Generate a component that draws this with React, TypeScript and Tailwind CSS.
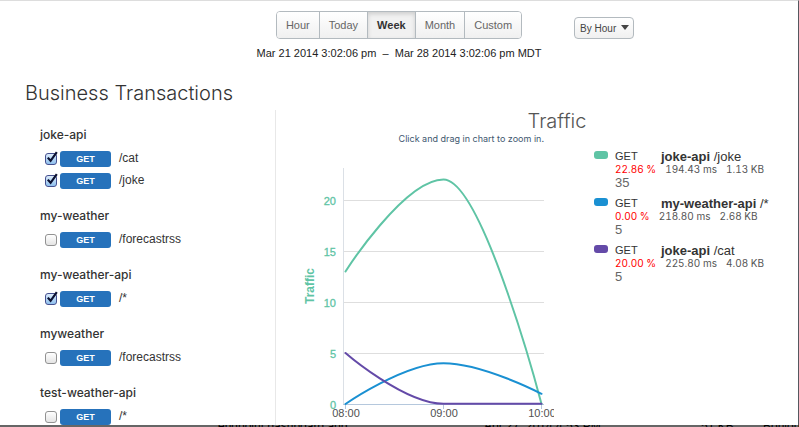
import React, { useState } from "react";

const SANS = "font-['Liberation_Sans',Arial,sans-serif]";
const INTER = "font-['Inter','Liberation_Sans',sans-serif]";

const ranges = ["Hour", "Today", "Week", "Month", "Custom"];

const groups = [
  { name: "joke-api", items: [{ path: "/cat", on: true }, { path: "/joke", on: true }] },
  { name: "my-weather", items: [{ path: "/forecastrss", on: false }] },
  { name: "my-weather-api", items: [{ path: "/*", on: true }] },
  { name: "myweather", items: [{ path: "/forecastrss", on: false }] },
  { name: "test-weather-api", items: [{ path: "/*", on: false }] },
];

const legend = [
  { swatch: "bg-[#5fc4a5]", api: "joke-api", path: "/joke", errors: "22.86 %", time: "194.43 ms", size: "1.13 KB", count: "35" },
  { swatch: "bg-[#1a90d2]", api: "my-weather-api", path: "/*", errors: "0.00 %", time: "218.80 ms", size: "2.68 KB", count: "5" },
  { swatch: "bg-[#644aa8]", api: "joke-api", path: "/cat", errors: "20.00 %", time: "225.80 ms", size: "4.08 KB", count: "5" },
];

const yTicks = [
  { label: "20", y: 55 },
  { label: "15", y: 106 },
  { label: "10", y: 157 },
  { label: "5", y: 208 },
  { label: "0", y: 259 },
];

const xTicks = [
  { label: "08:00", x: 70 },
  { label: "09:00", x: 168 },
  { label: "10:00", x: 266 },
];

function RangePicker() {
  const [active, setActive] = useState("Week");
  return (
    <div role="group" aria-label="Time range" className="flex h-7 overflow-hidden rounded border border-[#b3babf] divide-x divide-[#b3babf]">
      {ranges.map((r) => (
        <button
          key={r}
          type="button"
          aria-pressed={active === r}
          onClick={() => setActive(r)}
          className={
            active === r
              ? "bg-[#f1f1f1] px-[9px] text-[11px] font-bold text-[#333] shadow-[inset_0_2px_4px_rgba(0,0,0,0.15)]"
              : "bg-gradient-to-b from-white to-[#f0f0f0] px-[9px] text-[11px] text-[#666]"
          }
        >
          {r}
        </button>
      ))}
    </div>
  );
}

function Transaction({ path, on }: { path: string; on: boolean }) {
  return (
    <label className="flex h-[22px] items-center pl-[5px]">
      <span className="relative mr-[3px] flex">
        <input
          type="checkbox"
          defaultChecked={on}
          className="peer h-3 w-3 appearance-none rounded-[3px] border border-[#929292] bg-gradient-to-b from-white to-[#e4e4e4] checked:border-[#45508f] checked:from-[#dcebfa] checked:to-[#8fc0ee]"
        />
        <svg viewBox="0 0 14 14" className="pointer-events-none absolute -top-[2px] left-0 hidden h-[14px] w-[14px] peer-checked:block" aria-hidden="true">
          <path d="M2.8 6.6 L5.6 9.8 L11.8 1.2" fill="none" stroke="#0b1030" strokeWidth="2.2" />
        </svg>
      </span>
      <span className="h-4 w-[51px] rounded-[3px] bg-[#2672bb] text-center text-[9px] leading-4 font-bold text-white">GET</span>
      <span className="ml-2 pb-[2px] text-[12px] leading-5 text-[#333]">{path}</span>
    </label>
  );
}

function TrafficChart() {
  return (
    <svg width="278" height="280" viewBox="0 0 278 280" role="img" aria-label="Traffic per hour" className="block shrink-0">
      <g stroke="#dedede" shapeRendering="crispEdges">
        {yTicks.slice(0, 4).map((t) => (
          <line key={t.label} x1="67" x2="268" y1={t.y + 0.5} y2={t.y + 0.5} />
        ))}
        <line x1="67.5" x2="67.5" y1="23" y2="260" stroke="#dbe0e6" />
      </g>
      <g fill="#5fc4a5" stroke="#5fc4a5" strokeWidth="0.3" fontSize="11" textAnchor="end">
        {yTicks.map((t) => (
          <text key={t.label} x="60" y={t.y + 5}>{t.label}</text>
        ))}
      </g>
      <text transform="translate(38 141) rotate(-90)" textAnchor="middle" fontSize="12" fontWeight="bold" fill="#5fc4a5">Traffic</text>
      <g stroke="#b5c8dd" shapeRendering="crispEdges">
        <line x1="67" x2="268" y1="259.5" y2="259.5" />
        {xTicks.map((t) => (
          <line key={t.label} x1={t.x - 0.5} x2={t.x - 0.5} y1="260" y2="264" />
        ))}
      </g>
      <g fill="none" strokeWidth="2" strokeLinecap="round">
        <path d="M69.5 126.5 C69.5 126.5 128.3 34.5 167.5 34.5 C206.7 34.5 265.5 259 265.5 259" stroke="#5fc4a5" />
        <path d="M69.5 259 C69.5 259 128.3 218.2 167.5 218.2 C206.7 218.2 265.5 248.8 265.5 248.8" stroke="#1a90d2" />
        <path d="M69.5 208 C69.5 208 128.3 258.8 167.5 258.8 L265.5 258.8" stroke="#644aa8" />
      </g>
      <g fill="#505050" fontSize="11" textAnchor="middle">
        {xTicks.map((t) => (
          <text key={t.label} x={t.x} y="272">{t.label}</text>
        ))}
      </g>
    </svg>
  );
}

export default function App() {
  return (
    <div className={`${SANS} flex h-screen flex-col overflow-hidden bg-[#666]`}>
      <main className="min-h-0 flex-1 overflow-hidden border-t border-r border-t-[#dddddd] border-r-[#55585f] bg-white">
        <header className="pt-[10px]">
          <div className="grid grid-cols-[1fr_auto_1fr] items-end">
            <span />
            <RangePicker />
            <div className="relative ml-[52px] w-[60px]">
              <select aria-label="Group by" className="block h-[22px] w-full appearance-none rounded border border-[#b3babf] bg-gradient-to-b from-white to-[#f0f0f0] pl-[5px] text-[10px] text-[#444]">
                <option>By Hour</option>
                <option>By Day</option>
              </select>
              <svg viewBox="0 0 8 5" className="pointer-events-none absolute top-2 right-[5px] h-[5px] w-2" aria-hidden="true">
                <path d="M0 0 H8 L4 5 Z" fill="#444" />
              </svg>
            </div>
          </div>
          <p className="mt-[6px] text-center text-[11px] leading-4 whitespace-pre text-[#222]">{"Mar 21 2014 3:02:06 pm  –  Mar 28 2014 3:02:06 pm MDT"}</p>
        </header>

        <div className="mt-5 flex">
          <section className="w-[275px] shrink-0">
            <h1 className={`${INTER} pl-[25px] text-[20px] leading-6 font-light text-[#333]`}>Business Transactions</h1>
            <div className="mt-5 flex flex-col gap-[14px] pl-10">
              {groups.map((g) => (
                <div key={g.name}>
                  <h2 className={`${INTER} mb-[3px] text-[12px] leading-5 font-medium text-[#333]`}>{g.name}</h2>
                  {g.items.map((i) => (
                    <Transaction key={i.path} path={i.path} on={i.on} />
                  ))}
                </div>
              ))}
            </div>
          </section>

          <section className="mt-[29px] min-w-0 flex-1 border-l border-[#e8e8e8]">
            <h2 className={`${INTER} pl-10 text-center text-[20px] leading-[22px] font-light text-[#555]`}>Traffic</h2>
            <div className="flex">
              <div className="w-[278px] shrink-0">
                <p className={`${INTER} pr-[10px] text-right text-[9px] leading-[13px] text-[#3e576f]`}>Click and drag in chart to zoom in.</p>
                <TrafficChart />
              </div>
              <ul className="ml-10 flex flex-col gap-2 pt-[18px]">
                {legend.map((l) => (
                  <li key={l.api + l.path} className="flex">
                    <span className={`${l.swatch} mt-px mr-[7px] h-2 w-[14px] shrink-0 rounded-[3px]`} />
                    <div>
                      <p className="flex text-[13px] leading-[13px] text-[#333]">
                        <span className="w-[46px] text-[11px]">GET</span>
                        <span><b>{l.api}</b> {l.path}</span>
                      </p>
                      <p className={`${INTER} flex gap-[9px] text-[10px] leading-[13px] text-[#555] tabular-nums`}>
                        <span className="text-[#ff0000]">{l.errors}</span>
                        <span>{l.time}</span>
                        <span>{l.size}</span>
                      </p>
                      <p className="text-[13px] leading-[13px] text-[#666]">{l.count}</p>
                    </div>
                  </li>
                ))}
              </ul>
            </div>
          </section>
        </div>
      </main>
      <footer className="flex h-[2px] shrink-0 items-center overflow-hidden bg-[#666] pl-[218px] text-[12px] whitespace-nowrap text-black">
        <span className="w-[266px] shrink-0">endpoint dashboard.app</span>
        <span className="w-[217px] shrink-0">Apr 27, 2014 4:53 PM</span>
        <span className="w-[62px] shrink-0">51 KB</span>
        <span>Bonjour</span>
      </footer>
    </div>
  );
}
